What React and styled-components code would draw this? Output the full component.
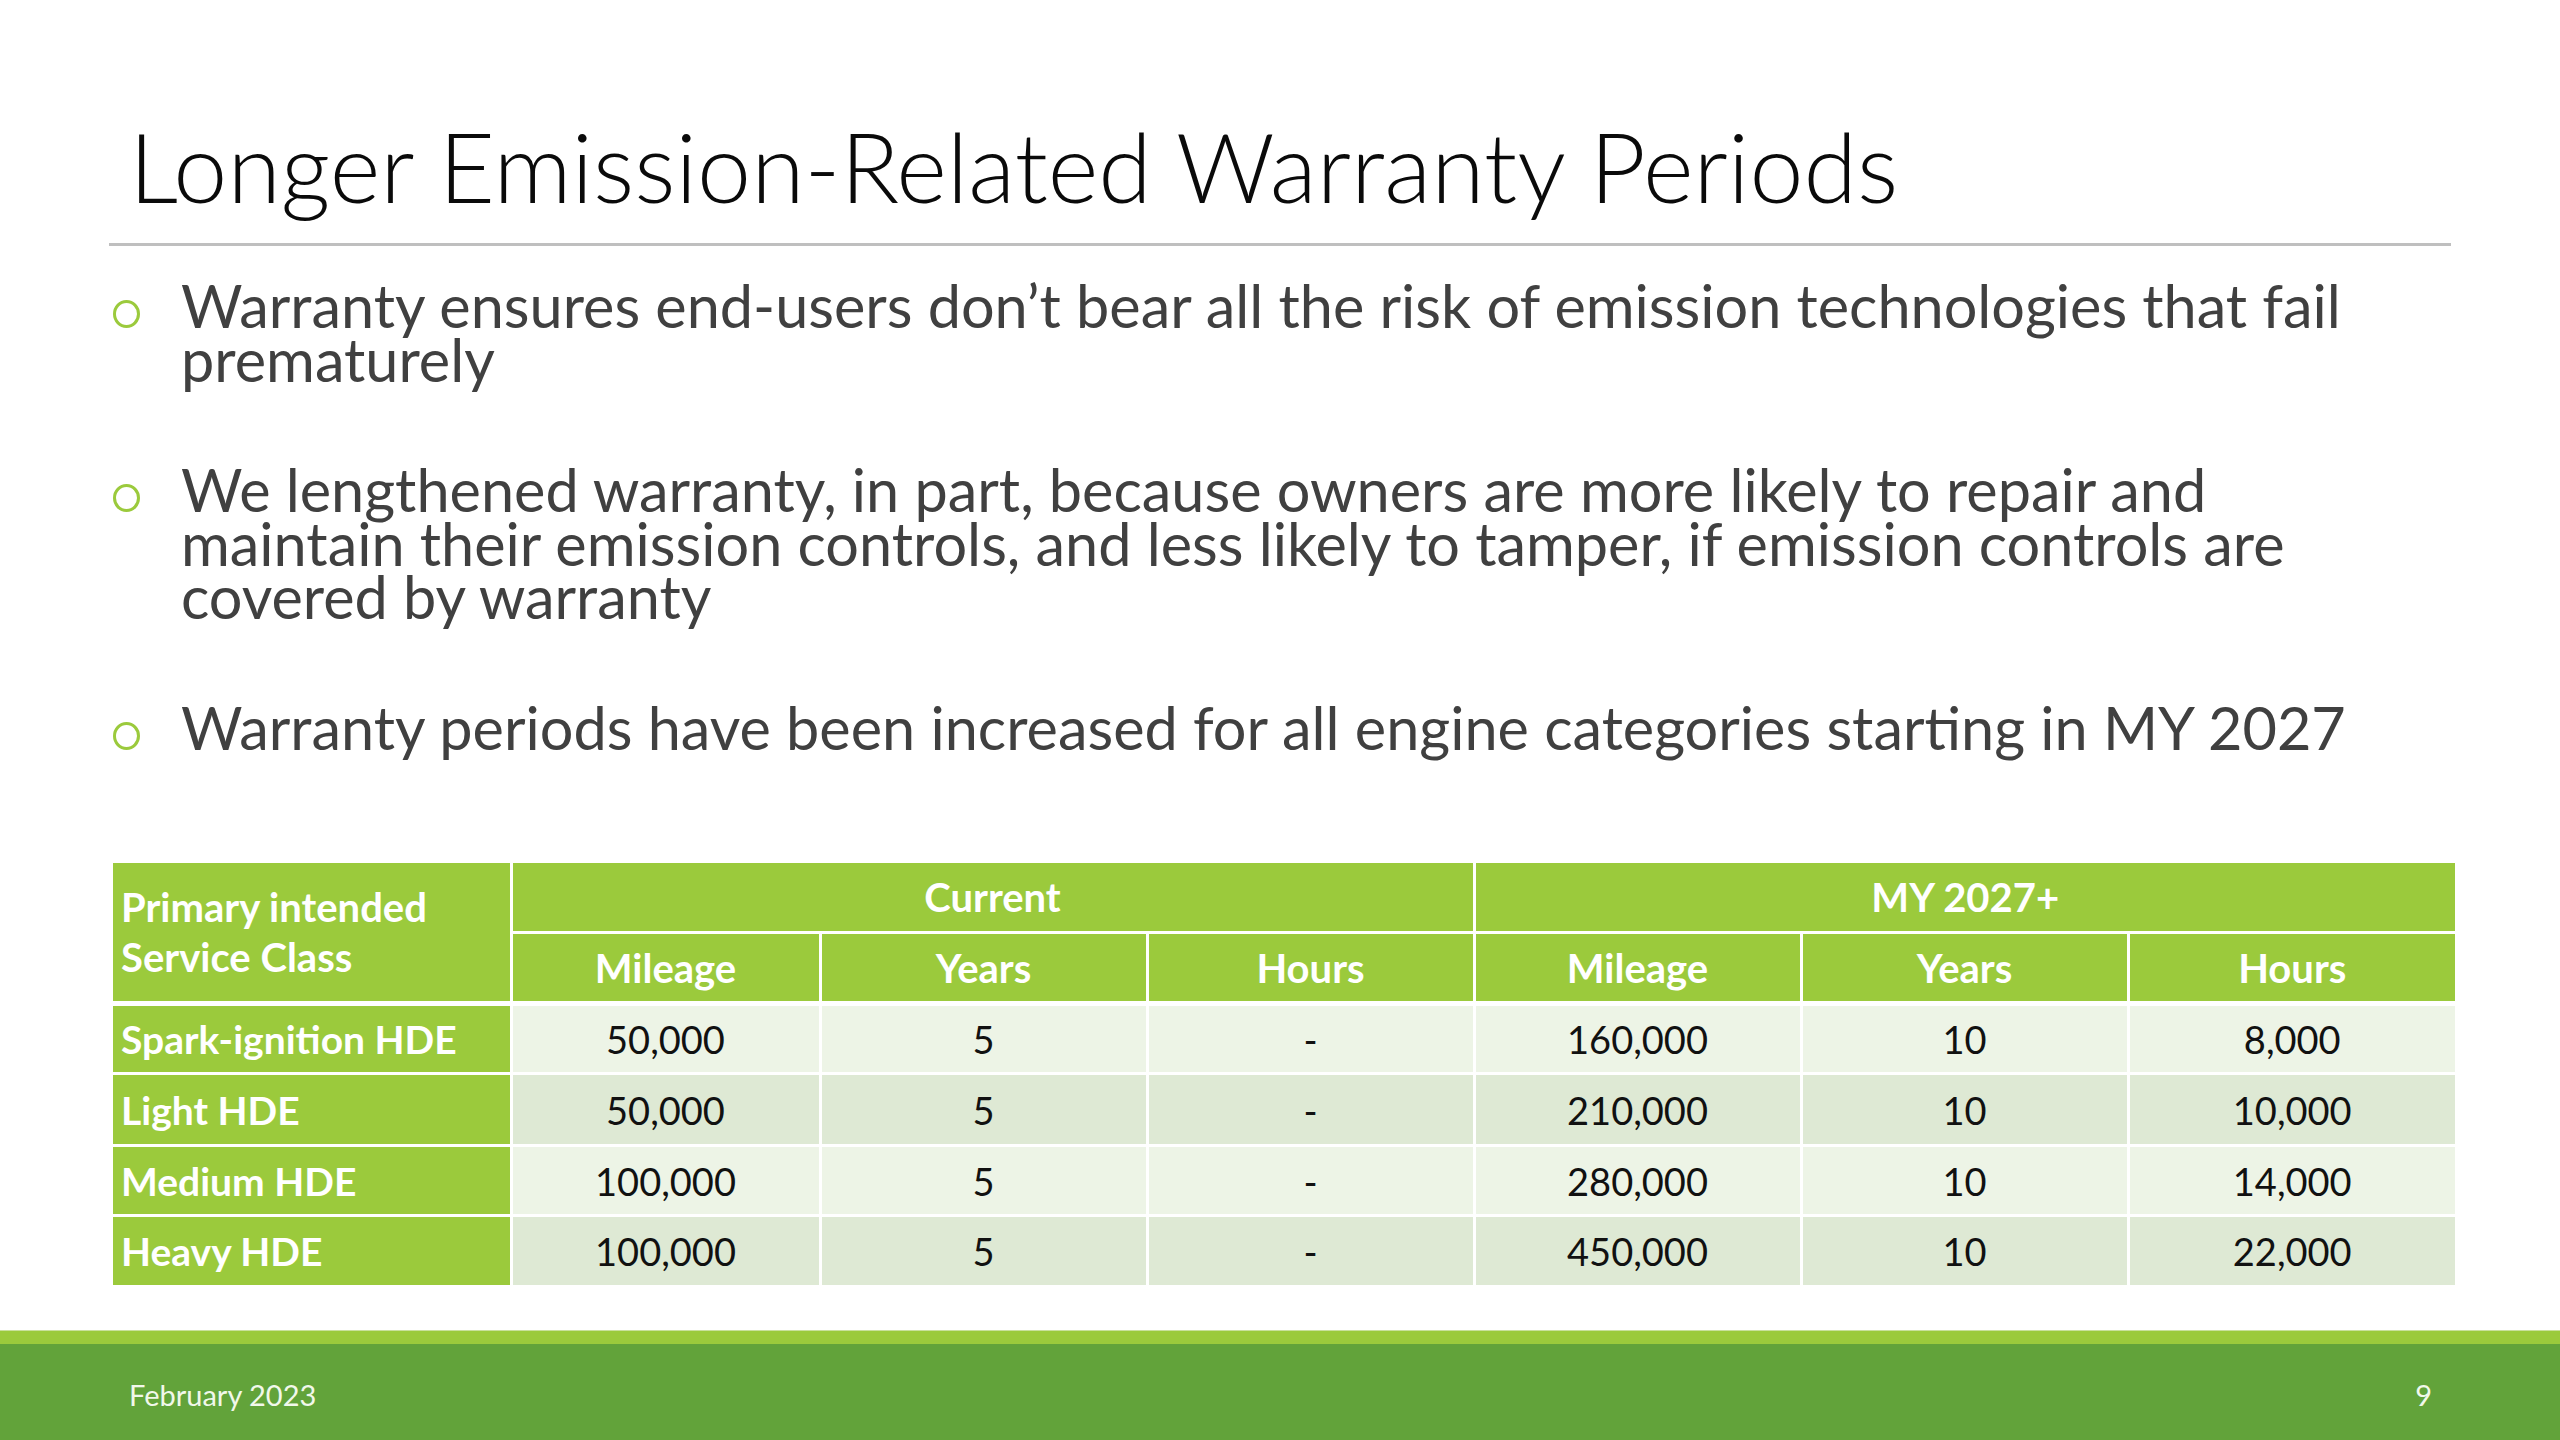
import React from 'react';
import styled, { createGlobalStyle } from 'styled-components';

const GlobalStyle = createGlobalStyle`
  html, body {
    margin: 0;
    padding: 0;
    background: #fff;
  }
  body {
    font-family: Lato, "Open Sans", "Liberation Sans", sans-serif;
  }
`;

const Slide = styled.div`
  width: 2560px;
  height: 1440px;
  display: flex;
  flex-direction: column;
  background: #fff;
  overflow: hidden;
`;

const TitleBar = styled.header`
  padding: 108px 109px 0;
`;

const Title = styled.h1`
  margin: 0;
  padding: 0 0 19px 20px;
  font-size: 97px;
  font-weight: 300;
  line-height: 1.2;
  color: #0a0a0a;
  border-bottom: 3px solid #bfbfbf;
  white-space: nowrap;
`;

const BulletList = styled.ul`
  list-style: none;
  margin: 0;
  padding: 33px 160px 0 113px;
  display: flex;
  flex-direction: column;
  gap: 77px;
`;

const Item = styled.li`
  display: flex;
  align-items: flex-start;
`;

const Marker = styled.span`
  flex: 0 0 68px;
  height: 53px;

  &::before {
    content: '';
    display: block;
    width: 21px;
    height: 22px;
    margin-top: 21px;
    border: 3px solid #9bca3c;
    border-radius: 50%;
  }
`;

const ItemText = styled.span`
  flex: 1;
  font-size: 59.4px;
  line-height: 53.5px;
  color: #404040;
`;

const Table = styled.table`
  margin: 109px 0 0 113px;
  width: 2340px;
  border-collapse: collapse;
  table-layout: fixed;
  font-size: 38px;
`;

const HeadCell = styled.th`
  height: ${p => (p.h ? `${p.h}px` : 'auto')};
  padding: 0 8px;
  background: #9bca3c;
  color: #fff;
  font-size: 40px;
  font-weight: 700;
  text-align: ${p => (p.left ? 'left' : 'center')};
  vertical-align: middle;
  line-height: 50px;
  border: 3px solid #fff;
  border-top: 0;
  border-bottom-width: ${p => (p.last ? 5 : 3)}px;
  &:first-child { border-left: 0; }
  &:last-child { border-right: 0; }
`;

const RowHead = styled.th`
  height: ${p => p.h}px;
  padding: 0 8px;
  background: #9bca3c;
  color: #fff;
  font-size: 39px;
  font-weight: 700;
  text-align: left;
  border: 3px solid #fff;
  border-left: 0;
  ${p => p.bottom && 'border-bottom: 0;'}
`;

const Cell = styled.td`
  padding: 0;
  text-align: center;
  color: #111;
  background: ${p => (p.alt ? '#dee9d4' : '#edf4e6')};
  border: 3px solid #fff;
  &:last-child { border-right: 0; }
  ${p => p.bottom && 'border-bottom: 0;'}
`;

const Footer = styled.footer`
  margin-top: auto;
  display: flex;
  flex-direction: column;
`;

const AccentStrip = styled.div`
  height: 14px;
  background: #9bca3c;
  border-top: 1px solid #c9e09c;
  box-sizing: border-box;
`;

const FooterBar = styled.div`
  height: 96px;
  display: flex;
  align-items: center;
  justify-content: space-between;
  padding: 4px 128px 0 129px;
  box-sizing: border-box;
  background: #62a33a;
  color: #f1f8ea;
  font-size: 29px;
`;

const bullets = [
  'Warranty ensures end-users don\u2019t bear all the risk of emission technologies that fail prematurely',
  'We lengthened warranty, in part, because owners are more likely to repair and maintain their emission controls, and less likely to tamper, if emission controls are covered by warranty',
  'Warranty periods have been increased for all engine categories starting in MY 2027',
];

const rows = [
  { name: 'Spark-ignition HDE', h: 66, values: ['50,000', '5', '-', '160,000', '10', '8,000'] },
  { name: 'Light HDE', h: 69, values: ['50,000', '5', '-', '210,000', '10', '10,000'] },
  { name: 'Medium HDE', h: 67, values: ['100,000', '5', '-', '280,000', '10', '14,000'] },
  { name: 'Heavy HDE', h: 68, values: ['100,000', '5', '-', '450,000', '10', '22,000'] },
];

const subHeads = ['Mileage', 'Years', 'Hours', 'Mileage', 'Years', 'Hours'];

export default function App() {
  return (
    <Slide>
      <GlobalStyle />
      <TitleBar>
        <Title>Longer Emission-Related Warranty Periods</Title>
      </TitleBar>

      <BulletList>
        {bullets.map(text => (
          <Item key={text}>
            <Marker />
            <ItemText>{text}</ItemText>
          </Item>
        ))}
      </BulletList>

      <Table>
        <colgroup>
          <col style={{ width: 398 }} />
          <col style={{ width: 309 }} />
          <col style={{ width: 327 }} />
          <col style={{ width: 327 }} />
          <col style={{ width: 327 }} />
          <col style={{ width: 327 }} />
          <col style={{ width: 327 }} />
        </colgroup>
        <thead>
          <tr>
            <HeadCell rowSpan={2} left last>
              Primary intended
              <br />
              Service Class
            </HeadCell>
            <HeadCell colSpan={3} h={68}>Current</HeadCell>
            <HeadCell colSpan={3} h={68}>MY 2027+</HeadCell>
          </tr>
          <tr>
            {subHeads.map((label, i) => (
              <HeadCell key={i} last h={67}>{label}</HeadCell>
            ))}
          </tr>
        </thead>
        <tbody>
          {rows.map((row, r) => (
            <tr key={row.name}>
              <RowHead h={row.h} bottom={r === rows.length - 1}>{row.name}</RowHead>
              {row.values.map((v, i) => (
                <Cell key={i} alt={r % 2 === 1} bottom={r === rows.length - 1}>{v}</Cell>
              ))}
            </tr>
          ))}
        </tbody>
      </Table>

      <Footer>
        <AccentStrip />
        <FooterBar>
          <span>February 2023</span>
          <span>9</span>
        </FooterBar>
      </Footer>
    </Slide>
  );
}
